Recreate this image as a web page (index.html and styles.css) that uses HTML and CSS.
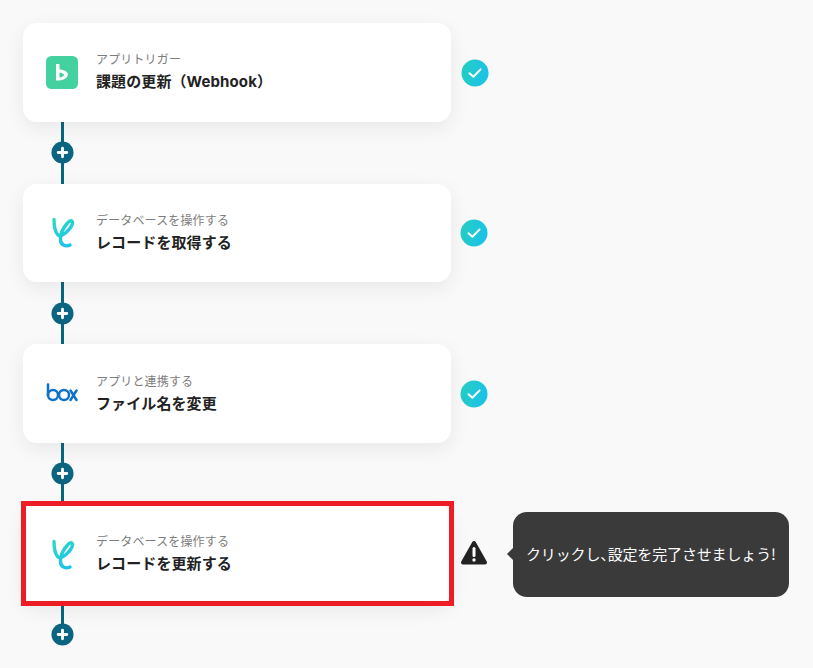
FILE: index.html
```html
<!DOCTYPE html>
<html lang="ja">
<head>
    <meta charset="UTF-8">
    <meta name="viewport" content="width=device-width, initial-scale=1.0">
    <title>フローボット</title>
    <link rel="stylesheet" href="styles.css">
</head>
<body>
    <svg class="defs" width="0" height="0" aria-hidden="true">
        <defs>
            <linearGradient id="check-grad" x1="0" y1="0" x2="1" y2="0.3">
                <stop offset="0" stop-color="#26cfc0"/>
                <stop offset="1" stop-color="#1cc2e6"/>
            </linearGradient>
            <linearGradient id="curl-grad" gradientUnits="userSpaceOnUse" x1="8" y1="3" x2="22" y2="30">
                <stop offset="0" stop-color="#2fd8c2"/>
                <stop offset="1" stop-color="#18c4ee"/>
            </linearGradient>
            <symbol id="check" viewBox="0 0 28 28">
                <circle cx="14" cy="14" r="13.5" fill="url(#check-grad)"/>
                <path d="M8.5 14.2l3.9 3.6 7.2-7.4" fill="none" stroke="#fff" stroke-width="2" stroke-linecap="round" stroke-linejoin="round"/>
            </symbol>
            <symbol id="curl" viewBox="0 0 32 33">
                <path d="M8 3.500C8 10 9 16 12 19C15.500 22 25 13 26.500 7.500C27 4 24 4 21.500 7C17 12 14 19 14.500 24C15 29.500 20 31 24 29" fill="none" stroke="url(#curl-grad)" stroke-width="3.400" stroke-linecap="round" stroke-linejoin="round"/>
            </symbol>
            <symbol id="plus" viewBox="0 0 24 24">
                <circle cx="12" cy="12" r="11.500" fill="#0b6580"/>
                <path d="M12 7.500v9M7.500 12h9" stroke="#fff" stroke-width="3" stroke-linecap="round"/>
            </symbol>
        </defs>
    </svg>

    <div class="flow">
        <div class="step">
            <div class="card">
                <svg class="app-icon" viewBox="0 0 32 33">
                    <rect width="32" height="33" rx="5.500" fill="#43d1a0"/>
                    <path fill="#fff" fill-rule="evenodd" d="M10 8h3.500v5.500C18 13.500 22 16 22 18.500C22 21.500 17 24.500 13 24.500H10zM13.500 16.500v5c2 0 4.500-1.500 4.500-2.500s-2.500-2.500-4.500-2.500z"/>
                </svg>
                <div class="card-text">
                    <div class="card-label">アプリトリガー</div>
                    <div class="card-title">課題の更新（Webhook）</div>
                </div>
            </div>
            <svg class="status status-first"><use href="#check"/></svg>
        </div>

        <div class="connector"><svg class="plus"><use href="#plus"/></svg></div>

        <div class="step">
            <div class="card">
                <svg class="app-icon"><use href="#curl"/></svg>
                <div class="card-text">
                    <div class="card-label">データベースを操作する</div>
                    <div class="card-title">レコードを取得する</div>
                </div>
            </div>
            <svg class="status"><use href="#check"/></svg>
        </div>

        <div class="connector"><svg class="plus"><use href="#plus"/></svg></div>

        <div class="step">
            <div class="card">
                <svg class="app-icon" viewBox="0 0 32 20">
                    <g fill="none" stroke="#0f72c9" stroke-width="2.500">
                        <path d="M2 1v11" stroke-linecap="round"/>
                        <circle cx="7" cy="11.500" r="5"/>
                        <circle cx="18" cy="11.500" r="5"/>
                        <path d="M24.500 7l6 9.500M30.500 7l-6 9.500" stroke-linecap="round"/>
                    </g>
                </svg>
                <div class="card-text">
                    <div class="card-label">アプリと連携する</div>
                    <div class="card-title">ファイル名を変更</div>
                </div>
            </div>
            <svg class="status"><use href="#check"/></svg>
        </div>

        <div class="connector"><svg class="plus"><use href="#plus"/></svg></div>

        <div class="step">
            <div class="card card-alert">
                <svg class="app-icon"><use href="#curl"/></svg>
                <div class="card-text">
                    <div class="card-label">データベースを操作する</div>
                    <div class="card-title">レコードを更新する</div>
                </div>
            </div>
            <svg class="status warn" viewBox="0 0 28 26">
                <path d="M14 3L3 22.500h22z" fill="#222" stroke="#222" stroke-width="4" stroke-linejoin="round"/>
                <path d="M14 8.500v7" stroke="#fff" stroke-width="3" stroke-linecap="round"/>
                <circle cx="14" cy="20" r="1.700" fill="#fff"/>
            </svg>
            <div class="tooltip">クリックし<span class="comma">、</span>設定を完了させましょう!</div>
        </div>

        <div class="connector connector-end"><svg class="plus"><use href="#plus"/></svg></div>
    </div>
</body>
</html>
```

FILE: styles.css
```css
/* page */
body {
    margin: 0;
    overflow: hidden;
    background: #f9f9f9;
    color: #222;
    font-family: "Noto Sans CJK JP", "Noto Sans", sans-serif;
}
.defs {
    position: absolute;
}
.flow {
    padding: 23px 0 0 23px;
}
.step {
    display: flex;
    align-items: center;
}

/* cards */
.card {
    position: relative;
    display: flex;
    align-items: center;
    gap: 18px;
    box-sizing: border-box;
    width: 428px;
    height: 98.67px;
    padding-left: 23px;
    background: #fff;
    border-radius: 14px;
    box-shadow: 0 6px 20px rgba(0, 0, 0, 0.07);
}
.card-alert::after {
    content: '';
    position: absolute;
    top: -4px;
    right: -3px;
    bottom: -2px;
    left: -2px;
    border: 5px solid #ee1c25;
}
.app-icon {
    flex: none;
    width: 32px;
    height: 33px;
}
.card-label {
    font-size: 12px;
    line-height: 18px;
    letter-spacing: 0.15px;
    color: #7d7d7d;
}
.card-title {
    margin-top: 2px;
    font-family: Inter, "Noto Sans CJK JP", sans-serif;
    font-size: 15px;
    line-height: 24px;
    letter-spacing: 0.1px;
    font-weight: 700;
}

/* status icons */
.status {
    flex: none;
    width: 28px;
    height: 28px;
    margin-left: 9px;
}
.status-first {
    margin-left: 10px;
    margin-top: 2px;
}
.warn {
    height: 26px;
    margin-bottom: 3px;
}

/* tooltip */
.tooltip {
    position: relative;
    display: flex;
    align-items: center;
    box-sizing: border-box;
    width: 276px;
    height: 85px;
    margin-left: 25px;
    padding: 0 0 2px 13px;
    background: #3a3a3a;
    border-radius: 14px;
    color: #fff;
    font-size: 15px;
    letter-spacing: -0.15px;
}
.tooltip::before {
    content: '';
    position: absolute;
    left: -6px;
    top: 36px;
    border-style: solid;
    border-width: 6px 6px 6px 0;
    border-color: transparent #3a3a3a transparent transparent;
}
.comma {
    font-feature-settings: "palt";
}

/* connector between cards */
.connector {
    display: flex;
    align-items: center;
    width: 78px;
    height: 62px;
    justify-content: center;
    background: linear-gradient(#0b6580, #0b6580) center / 3px 100% no-repeat;
}
.connector-end {
    background-size: 3px 50%;
    background-position: center top;
}
.plus {
    width: 23px;
    height: 23px;
}
```
